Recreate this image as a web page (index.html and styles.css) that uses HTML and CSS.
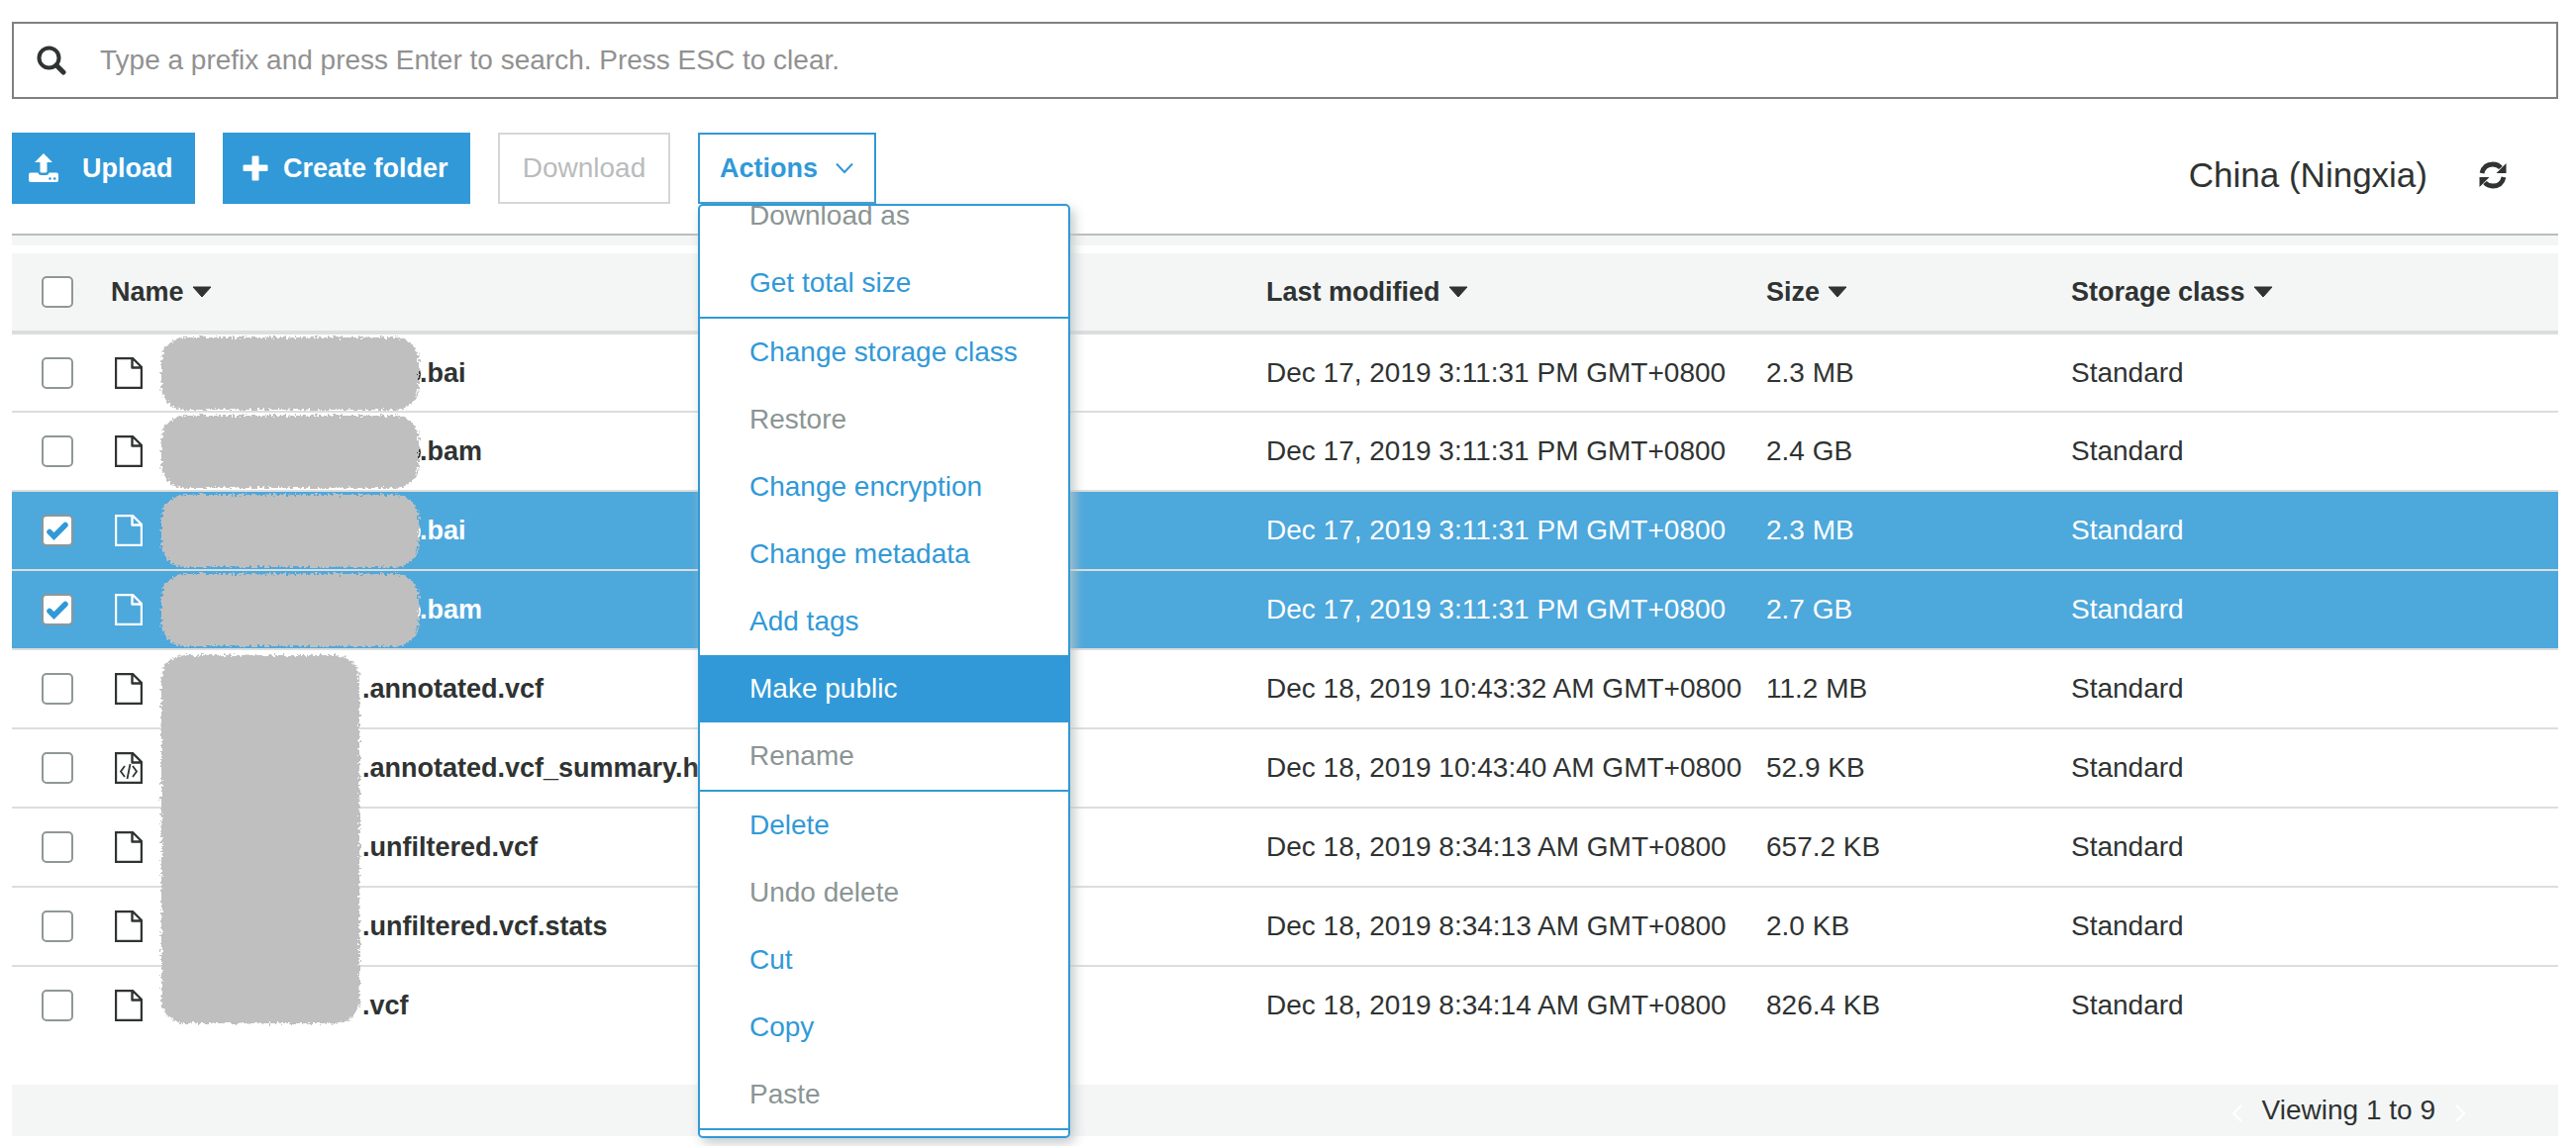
FILE: index.html
```html
<!DOCTYPE html>
<html lang="en">
<head>
<meta charset="utf-8">
<title>Objects</title>
<link rel="stylesheet" href="styles.css">
</head>
<body>
<svg class="defs" aria-hidden="true">
  <defs>
    <filter id="rough" x="-5%" y="-10%" width="110%" height="120%">
      <feTurbulence type="fractalNoise" baseFrequency="0.35" numOctaves="2" seed="4" result="n"/>
      <feDisplacementMap in="SourceGraphic" in2="n" scale="8" xChannelSelector="R" yChannelSelector="G"/>
    </filter>
    <symbol id="file" viewBox="0 0 28 32">
      <path d="M1 1H18L27 10V31H1ZM17.500 1V10.500H27" fill="none" stroke="currentColor" stroke-width="2.400" stroke-linejoin="round"/>
    </symbol>
    <symbol id="file-code" viewBox="0 0 28 32">
      <path d="M1 1H18L27 10V31H1ZM17.500 1V10.500H27" fill="none" stroke="currentColor" stroke-width="2.400" stroke-linejoin="round"/>
      <path d="M10 14L6 19.500L10 25M18 14L22 19.500L18 25M15.500 12L12.500 27" fill="none" stroke="currentColor" stroke-width="1.800"/>
    </symbol>
    <symbol id="tick" viewBox="0 0 32 32">
      <path d="M8 17.500L12.500 22L24 10.500" fill="none" stroke="#3199d7" stroke-width="5.500" stroke-linecap="round"/>
    </symbol>
    <symbol id="caret" viewBox="0 0 20 12">
      <path d="M1 1H19L10 11Z" fill="currentColor" stroke="currentColor" stroke-linejoin="round"/>
    </symbol>
    <symbol id="mask" viewBox="0 0 270 76">
      <ellipse cx="257" cy="39" rx="6" ry="8" fill="none" stroke="currentColor" stroke-width="4"/>
      <rect x="3" y="2" width="260" height="73" rx="24" fill="#bfbfbf" filter="url(#rough)"/>
    </symbol>
  </defs>
</svg>

<main class="page">
  <label class="search">
    <svg class="search-icon" viewBox="0 0 30 30" aria-hidden="true"><circle cx="12.500" cy="12.500" r="10" fill="none" stroke="currentColor" stroke-width="4"/><path d="M20 20L27 27" stroke="currentColor" stroke-width="5" stroke-linecap="round"/></svg>
    <input class="search-input" type="text" aria-label="Search by prefix" placeholder="Type a prefix and press Enter to search. Press ESC to clear.">
  </label>

  <div class="toolbar">
    <button class="btn btn-primary btn-upload" type="button">
      <svg class="icon-upload" viewBox="0 0 30 30" aria-hidden="true"><path d="M15 0L24 9H18.500V18Q18.500 19.500 17 19.500H13Q11.500 19.500 11.500 18V9H6Z" fill="currentColor"/><path d="M2 19.500H9.500Q10 22 13 22H17Q20 22 20.500 19.500H28Q30 19.500 30 21.500V27Q30 29 28 29H2Q0 29 0 27V21.500Q0 19.500 2 19.500Z" fill="currentColor"/><circle cx="21.500" cy="25.500" r="1.300" fill="#3199d7"/><circle cx="26.200" cy="25.500" r="1.300" fill="#3199d7"/></svg>
      Upload
    </button>
    <button class="btn btn-primary btn-create" type="button">
      <svg class="icon-plus" viewBox="0 0 26 26" aria-hidden="true"><path d="M10.500 .500H15.500Q16.500 .500 16.500 1.500V9.500H24.500Q25.500 9.500 25.500 10.500V15Q25.500 16 24.500 16H16.500V24.500Q16.500 25.500 15.500 25.500H10.500Q9.500 25.500 9.500 24.500V16H1.500Q.500 16 .500 15V10.500Q.500 9.500 1.500 9.500H9.500V1.500Q9.500 .500 10.500 .500Z" fill="currentColor"/></svg>
      Create folder
    </button>
    <button class="btn btn-download" type="button" disabled>Download</button>
    <div class="actions">
      <button class="btn btn-actions" type="button" aria-haspopup="menu" aria-expanded="true">
        Actions
        <svg class="icon-chevron" viewBox="0 0 18 12" aria-hidden="true"><path d="M1 1.500L9 10L17 1.500" fill="none" stroke="currentColor" stroke-width="2"/></svg>
      </button>
      <div class="menu">
        <div class="menu-list">
          <div class="menu-group">
            <button class="menu-item" type="button" disabled>Download as</button>
            <button class="menu-item" type="button">Get total size</button>
          </div>
          <div class="menu-group">
            <button class="menu-item" type="button">Change storage class</button>
            <button class="menu-item" type="button" disabled>Restore</button>
            <button class="menu-item" type="button">Change encryption</button>
            <button class="menu-item" type="button">Change metadata</button>
            <button class="menu-item" type="button">Add tags</button>
            <button class="menu-item menu-item-active" type="button">Make public</button>
            <button class="menu-item" type="button" disabled>Rename</button>
          </div>
          <div class="menu-group">
            <button class="menu-item" type="button">Delete</button>
            <button class="menu-item" type="button" disabled>Undo delete</button>
            <button class="menu-item" type="button">Cut</button>
            <button class="menu-item" type="button">Copy</button>
            <button class="menu-item" type="button" disabled>Paste</button>
          </div>
        </div>
      </div>
    </div>
    <div class="region">
      <span>China (Ningxia)</span>
      <button class="refresh" type="button" aria-label="Refresh">
        <svg class="icon-refresh" viewBox="0 0 28 28" aria-hidden="true"><path d="M3 12Q5 3 14 3Q19 3 22 6.500M25 16Q23 25 14 25Q9 25 6 21.500" fill="none" stroke="currentColor" stroke-width="4.800"/><path d="M27.500 2V12H17.500ZM.500 26V16H10.500Z" fill="currentColor"/></svg>
      </button>
    </div>
  </div>

  <div class="list">
    <div class="list-top"><div class="pager" aria-hidden="true"><span class="pager-text">Viewing 1 to 9</span></div></div>
    <table class="objects">
      <colgroup><col class="col-check"><col><col class="col-date"><col class="col-size"><col class="col-class"></colgroup>
      <thead>
        <tr>
          <th><span class="check"><input type="checkbox" aria-label="Select all"></span></th>
          <th><button class="sort" type="button">Name<svg class="caret"><use href="#caret"/></svg></button></th>
          <th><button class="sort" type="button">Last modified<svg class="caret"><use href="#caret"/></svg></button></th>
          <th><button class="sort" type="button">Size<svg class="caret"><use href="#caret"/></svg></button></th>
          <th><button class="sort" type="button">Storage class<svg class="caret"><use href="#caret"/></svg></button></th>
        </tr>
      </thead>
      <tbody>
        <tr>
          <td><span class="check"><input type="checkbox" aria-label="Select object 1"></span></td>
          <td><div class="object"><svg class="file"><use href="#file"/></svg><svg class="mask"><use href="#mask"/></svg><a class="name" href="#">.bai</a></div></td>
          <td>Dec 17, 2019 3:11:31 PM GMT+0800</td><td>2.3 MB</td><td>Standard</td>
        </tr>
        <tr>
          <td><span class="check"><input type="checkbox" aria-label="Select object 2"></span></td>
          <td><div class="object"><svg class="file"><use href="#file"/></svg><svg class="mask"><use href="#mask"/></svg><a class="name" href="#">.bam</a></div></td>
          <td>Dec 17, 2019 3:11:31 PM GMT+0800</td><td>2.4 GB</td><td>Standard</td>
        </tr>
        <tr class="selected">
          <td><span class="check"><input type="checkbox" aria-label="Select object 3" checked><svg class="tick"><use href="#tick"/></svg></span></td>
          <td><div class="object"><svg class="file"><use href="#file"/></svg><svg class="mask"><use href="#mask"/></svg><a class="name" href="#">.bai</a></div></td>
          <td>Dec 17, 2019 3:11:31 PM GMT+0800</td><td>2.3 MB</td><td>Standard</td>
        </tr>
        <tr class="selected">
          <td><span class="check"><input type="checkbox" aria-label="Select object 4" checked><svg class="tick"><use href="#tick"/></svg></span></td>
          <td><div class="object"><svg class="file"><use href="#file"/></svg><svg class="mask"><use href="#mask"/></svg><a class="name" href="#">.bam</a></div></td>
          <td>Dec 17, 2019 3:11:31 PM GMT+0800</td><td>2.7 GB</td><td>Standard</td>
        </tr>
        <tr>
          <td><span class="check"><input type="checkbox" aria-label="Select object 5"></span></td>
          <td><div class="object object-vcf"><svg class="file"><use href="#file"/></svg><a class="name" href="#">.annotated.vcf</a><svg class="mask-tall" viewBox="0 0 206 378" aria-hidden="true"><rect x="3" y="3" width="200" height="372" rx="24" fill="#bfbfbf" filter="url(#rough)"/></svg></div></td>
          <td>Dec 18, 2019 10:43:32 AM GMT+0800</td><td>11.2 MB</td><td>Standard</td>
        </tr>
        <tr>
          <td><span class="check"><input type="checkbox" aria-label="Select object 6"></span></td>
          <td><div class="object object-vcf"><svg class="file"><use href="#file-code"/></svg><a class="name" href="#">.annotated.vcf_summary.html</a></div></td>
          <td>Dec 18, 2019 10:43:40 AM GMT+0800</td><td>52.9 KB</td><td>Standard</td>
        </tr>
        <tr>
          <td><span class="check"><input type="checkbox" aria-label="Select object 7"></span></td>
          <td><div class="object object-vcf"><svg class="file"><use href="#file"/></svg><a class="name" href="#">.unfiltered.vcf</a></div></td>
          <td>Dec 18, 2019 8:34:13 AM GMT+0800</td><td>657.2 KB</td><td>Standard</td>
        </tr>
        <tr>
          <td><span class="check"><input type="checkbox" aria-label="Select object 8"></span></td>
          <td><div class="object object-vcf"><svg class="file"><use href="#file"/></svg><a class="name" href="#">.unfiltered.vcf.stats</a></div></td>
          <td>Dec 18, 2019 8:34:13 AM GMT+0800</td><td>2.0 KB</td><td>Standard</td>
        </tr>
        <tr>
          <td><span class="check"><input type="checkbox" aria-label="Select object 9"></span></td>
          <td><div class="object object-vcf"><svg class="file"><use href="#file"/></svg><a class="name" href="#">.vcf</a></div></td>
          <td>Dec 18, 2019 8:34:14 AM GMT+0800</td><td>826.4 KB</td><td>Standard</td>
        </tr>
      </tbody>
    </table>
    <div class="pager pager-bottom">
      <button class="page-btn" type="button" aria-label="Previous page"><svg class="page-arrow" viewBox="0 0 10 18"><path d="M9 1L1 9L9 17" fill="none" stroke="currentColor" stroke-width="2"/></svg></button>
      <span class="pager-text">Viewing 1 to 9</span>
      <button class="page-btn" type="button" aria-label="Next page"><svg class="page-arrow" viewBox="0 0 10 18"><path d="M1 1L9 9L1 17" fill="none" stroke="currentColor" stroke-width="2"/></svg></button>
    </div>
  </div>
</main>
</body>
</html>
```

FILE: styles.css
```css
* { box-sizing: border-box; }

body {
  margin: 0;
  background: #fff;
  color: #2f3332;
  font-family: "Liberation Sans", Arial, sans-serif;
  font-size: 28px;
  line-height: 32px;
}

button {
  font: inherit;
  color: inherit;
  background: none;
  border: 0;
  padding: 0;
}

svg { display: block; flex: none; }

.defs { position: absolute; width: 0; height: 0; }

.page { padding: 22px 18px 10px 12px; }

.search {
  display: flex;
  align-items: center;
  gap: 34px;
  height: 78px;
  padding-left: 23px;
  border: 2px solid #808080;
}

.search-icon { width: 30px; height: 30px; }

.search-input {
  flex: 1;
  border: 0;
  outline: 0;
  padding: 0;
  background: none;
  font: inherit;
  color: inherit;
}

.search-input::placeholder { color: #919191; opacity: 1; }

.toolbar {
  display: flex;
  gap: 28px;
  margin-top: 34px;
  padding-bottom: 30px;
}

.btn {
  display: flex;
  align-items: center;
  height: 72px;
  border: 2px solid #3199d7;
  font-size: 27px;
  font-weight: bold;
  white-space: nowrap;
}

.btn-primary { background: #3199d7; color: #fff; }
.btn-upload { width: 185px; padding-left: 15px; gap: 24px; }
.btn-create { width: 250px; padding-left: 18px; gap: 15px; }
.icon-upload { width: 30px; height: 30px; }
.icon-plus { width: 26px; height: 26px; }

.btn-download {
  width: 174px;
  justify-content: center;
  border-color: #d5d6d6;
  color: #b9bcbc;
  font-size: 28px;
  font-weight: normal;
}

.btn-actions { width: 180px; padding-left: 20px; gap: 18px; color: #3199d7; }
.icon-chevron { width: 18px; height: 12px; }

.actions { position: relative; }

.menu {
  position: absolute;
  z-index: 2;
  top: 100%;
  left: 0;
  width: 376px;
  overflow: hidden;
  padding-bottom: 6px;
  background: #fff;
  border: 2px solid #3199d7;
  border-radius: 5px;
  box-shadow: 4px 5px 12px rgba(190, 196, 196, .9);
}

/* The list is scrolled slightly past its first entry. */
.menu-list { margin-top: -24px; }

.menu-group { border-bottom: 2px solid #3199d7; }

.menu-item {
  display: block;
  width: 100%;
  height: 68px;
  padding-left: 50px;
  color: #3199d7;
  text-align: left;
}

.menu-item:disabled { color: #8b9594; }
.menu-item-active { background: #3199d7; color: #fff; }

.region {
  display: flex;
  align-items: center;
  gap: 52px;
  margin-left: auto;
  padding: 14px 52px 0 0;
  font-size: 35px;
}

.icon-refresh { width: 28px; height: 28px; }

.list { border-top: 2px solid #bbbdbd; }

.list-top {
  display: flex;
  align-items: flex-end;
  height: 10px;
  margin-bottom: 8px;
  overflow: hidden;
}

.pager {
  display: flex;
  flex: 1;
  align-items: center;
  justify-content: flex-end;
  gap: 20px;
  height: 52px;
  padding-right: 124px;
  background: #f4f6f6;
}

.pager-bottom { margin-top: 39px; padding-right: 94px; }
.page-btn { color: #fff; padding-top: 6px; }
.page-arrow { width: 10px; height: 18px; }

.objects {
  width: 100%;
  table-layout: fixed;
  border-collapse: separate;
  border-spacing: 0;
}

.col-check { width: 100px; }
.col-date { width: 505px; }
.col-size { width: 308px; }
.col-class { width: 492px; }

th, td {
  padding: 0;
  text-align: left;
  white-space: nowrap;
}

th {
  height: 82px;
  background: #f4f6f6;
  border-bottom: 4px solid #dcdddd;
}

td {
  height: 80px;
  border-bottom: 2px solid #dcdddd;
}

tbody tr:first-child > td { height: 79px; }
tbody tr:last-child > td { border-bottom-color: transparent; }

.sort {
  display: flex;
  align-items: center;
  gap: 8px;
  font-size: 27px;
  font-weight: bold;
}

.caret { width: 20px; height: 12px; }

.selected td { background: #4da8dc; color: #fff; }

.check {
  display: grid;
  width: 32px;
  height: 32px;
  margin-left: 30px;
}

.check input {
  grid-area: 1 / 1;
  appearance: none;
  width: 32px;
  height: 32px;
  margin: 0;
  background: #fff;
  border: 2px solid #8f9797;
  border-radius: 5px;
}

.tick {
  grid-area: 1 / 1;
  width: 32px;
  height: 32px;
  pointer-events: none;
}

.object {
  position: relative;
  display: flex;
  align-items: center;
  padding-left: 4px;
}

.file { width: 28px; height: 32px; margin-right: 16px; }
.mask { width: 270px; height: 76px; margin-right: -6px; }

.mask-tall {
  position: absolute;
  z-index: 1;
  top: -21px;
  left: 48px;
  width: 206px;
  height: 378px;
}

.object-vcf { gap: 206px; }

.name {
  color: inherit;
  font-size: 27px;
  font-weight: bold;
  text-decoration: none;
}
```
